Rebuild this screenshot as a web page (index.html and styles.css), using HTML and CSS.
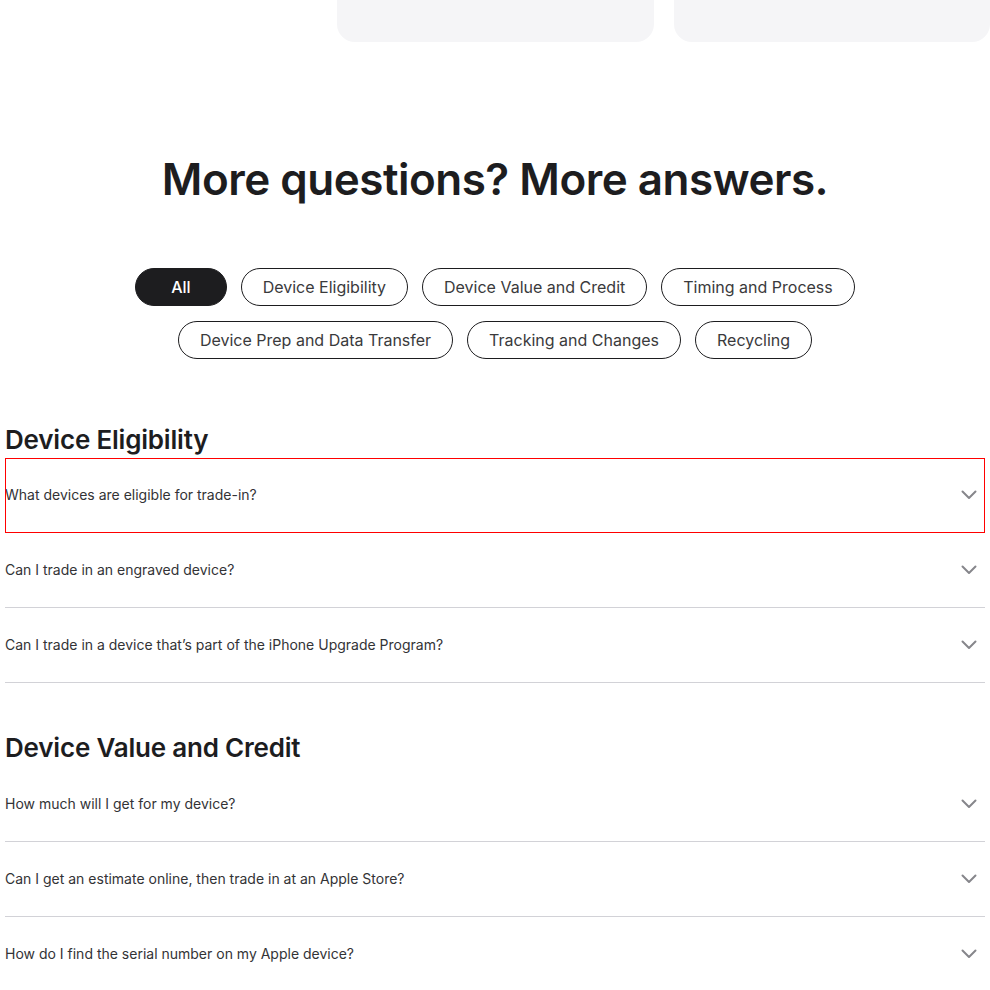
FILE: index.html
```html
<!DOCTYPE html>
<html lang="en">
<head>
<meta charset="utf-8">
<title>Trade In FAQ</title>
<link rel="stylesheet" href="styles.css">
</head>
<body>
<div class="page">
  <div class="cards">
    <div class="card card-blank"></div>
    <div class="card"></div>
    <div class="card"></div>
  </div>

  <h1 class="headline">More questions? More answers.</h1>

  <div class="filters">
    <div class="filter-row">
      <button class="pill pill-active">All</button>
      <button class="pill">Device Eligibility</button>
      <button class="pill">Device Value and Credit</button>
      <button class="pill">Timing and Process</button>
    </div>
    <div class="filter-row">
      <button class="pill">Device Prep and Data Transfer</button>
      <button class="pill">Tracking and Changes</button>
      <button class="pill">Recycling</button>
    </div>
  </div>

  <section class="faq-section first">
    <h2 class="section-title">Device Eligibility</h2>
    <div class="faq-item focused">
      <span class="question">What devices are eligible for trade-in?</span>
      <svg class="chev" width="16" height="10" viewBox="0 0 16 10"><path d="M1.5 1.5 L8 8 L14.5 1.5" fill="none" stroke="#86868b" stroke-width="2" stroke-linecap="round" stroke-linejoin="round"/></svg>
    </div>
    <div class="faq-item">
      <span class="question">Can I trade in an engraved device?</span>
      <svg class="chev" width="16" height="10" viewBox="0 0 16 10"><path d="M1.5 1.5 L8 8 L14.5 1.5" fill="none" stroke="#86868b" stroke-width="2" stroke-linecap="round" stroke-linejoin="round"/></svg>
    </div>
    <div class="faq-item">
      <span class="question">Can I trade in a device that’s part of the iPhone Upgrade Program?</span>
      <svg class="chev" width="16" height="10" viewBox="0 0 16 10"><path d="M1.5 1.5 L8 8 L14.5 1.5" fill="none" stroke="#86868b" stroke-width="2" stroke-linecap="round" stroke-linejoin="round"/></svg>
    </div>
  </section>

  <section class="faq-section second">
    <h2 class="section-title">Device Value and Credit</h2>
    <div class="faq-item">
      <span class="question">How much will I get for my device?</span>
      <svg class="chev" width="16" height="10" viewBox="0 0 16 10"><path d="M1.5 1.5 L8 8 L14.5 1.5" fill="none" stroke="#86868b" stroke-width="2" stroke-linecap="round" stroke-linejoin="round"/></svg>
    </div>
    <div class="faq-item">
      <span class="question">Can I get an estimate online, then trade in at an Apple Store?</span>
      <svg class="chev" width="16" height="10" viewBox="0 0 16 10"><path d="M1.5 1.5 L8 8 L14.5 1.5" fill="none" stroke="#86868b" stroke-width="2" stroke-linecap="round" stroke-linejoin="round"/></svg>
    </div>
    <div class="faq-item">
      <span class="question">How do I find the serial number on my Apple device?</span>
      <svg class="chev" width="16" height="10" viewBox="0 0 16 10"><path d="M1.5 1.5 L8 8 L14.5 1.5" fill="none" stroke="#86868b" stroke-width="2" stroke-linecap="round" stroke-linejoin="round"/></svg>
    </div>
  </section>
</div>
</body>
</html>
```
FILE: styles.css
```css
* { box-sizing: border-box; }
html, body { margin: 0; padding: 0; background: #fff; }
body {
  font-family: Inter, "Noto Sans", "Liberation Sans", sans-serif;
  color: #1d1d1f;
  -webkit-font-smoothing: antialiased;
}
.page { padding: 0 5px 0 5px; }

.cards {
  display: flex;
  gap: 20px;
  margin-left: -4px;
  margin-right: -5px;
}
.card {
  flex: 1;
  height: 42px;
  background: #f5f5f7;
  border-radius: 0 0 18px 18px;
}
.card-blank { background: #fff; }

.headline {
  margin: 113px 0 0;
  text-align: center;
  font-size: 44px;
  line-height: 1.1;
  font-weight: 600;
  letter-spacing: -0.5px;
  color: #1d1d1f;
}

.filters {
  margin-top: 65px;
  display: flex;
  flex-direction: column;
  align-items: center;
  gap: 15px;
}
.filter-row {
  display: flex;
  justify-content: center;
  gap: 14px;
}
.pill {
  font-family: inherit;
  font-size: 16px;
  line-height: 20px;
  height: 38px;
  padding: 8px 21px;
  border: 1px solid #1d1d1f;
  border-radius: 20px;
  background: #fff;
  color: #3a3a3c;
  font-weight: 400;
}
.pill-active {
  background: #1d1d1f;
  color: #fff;
  font-weight: 500;
  padding: 8px 35px;
}

.faq-section { margin-top: 49px; }
.faq-section.first { margin-top: 65px; }
.section-title {
  margin: 0 0 4px;
  font-size: 26px;
  line-height: 31px;
  font-weight: 600;
  letter-spacing: -0.2px;
  color: #1d1d1f;
}
.faq-section.first .section-title { margin-bottom: 3px; }
.faq-item {
  height: 75px;
  display: flex;
  align-items: center;
  justify-content: space-between;
  border-bottom: 1px solid #d2d2d7;
  padding-right: 8px;
}
.faq-item.focused { outline: 1px solid #ff0000; outline-offset: -1px; }
.question {
  font-size: 14px;
  line-height: 20px;
  color: #333336;
}
.chev { display: block; }
```
